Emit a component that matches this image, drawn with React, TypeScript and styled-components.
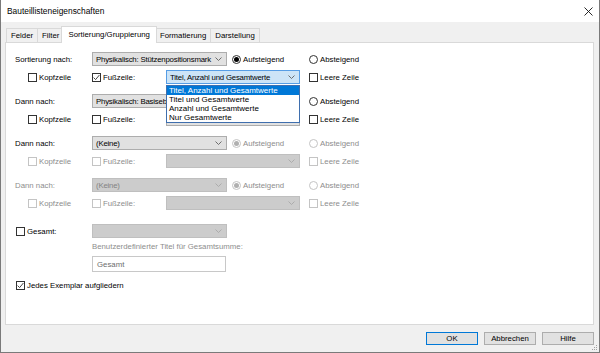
import styled, { createGlobalStyle } from 'styled-components';

const GlobalStyle = createGlobalStyle`
  html, body {
    margin: 0;
    padding: 0;
    background: #ffffff;
  }
  body {
    font-family: "Liberation Sans", Arial, sans-serif;
  }
  * {
    box-sizing: border-box;
  }
`;

const Window = styled.div`
  position: relative;
  width: 600px;
  height: 353px;
  display: flex;
  flex-direction: column;
  background: #f0f0f0;
  border: 1px solid #7a7a7a;
  border-top: none;
  font-size: 7.8px;
  color: #000;
`;

const TitleBar = styled.div`
  height: 22px;
  flex: none;
  display: flex;
  align-items: center;
  justify-content: space-between;
  padding: 0 6px 0 6px;
  background: #ffffff;
`;

const Title = styled.span`
  font-size: 8.4px;
  color: #000;
`;

const Body = styled.div`
  flex: 1;
  display: flex;
  flex-direction: column;
  padding: 0 5px 0 4px;
`;

const TabStrip = styled.div`
  height: 20px;
  display: flex;
  align-items: flex-end;
  padding-left: 1px;
`;

const Tab = styled.div<{ $active?: boolean }>`
  position: relative;
  display: flex;
  align-items: center;
  height: ${p => (p.$active ? '17px' : '14px')};
  margin: ${p => (p.$active ? '0 -2px -1px -2px' : '0 -1px 0 0')};
  padding: ${p => (p.$active ? '0 6px 1px' : '0 4px')};
  z-index: ${p => (p.$active ? 2 : 1)};
  background: ${p => (p.$active ? '#ffffff' : '#f0f0f0')};
  border: 1px solid #d9d9d9;
  border-bottom: none;
  white-space: nowrap;
`;

const Panel = styled.div`
  height: 283px;
  flex: none;
  background: #ffffff;
  border: 1px solid #d9d9d9;
  padding: 9px 0 0 9px;
  display: flex;
  flex-direction: column;
`;

const Group = styled.div`
  display: flex;
  flex-direction: column;
  gap: 4px;
  margin-bottom: 10px;
`;

const Row = styled.div<{ $top?: number; $indent?: number; $h?: number }>`
  display: flex;
  align-items: center;
  height: ${p => p.$h ?? 14}px;
  margin-top: ${p => p.$top ?? 0}px;
  margin-left: ${p => p.$indent ?? 0}px;
`;

const Cell = styled.div<{ $w?: number; $pad?: number; $off?: boolean }>`
  width: ${p => (p.$w ? `${p.$w}px` : 'auto')};
  flex: none;
  display: flex;
  align-items: center;
  padding-left: ${p => p.$pad ?? 0}px;
  color: ${p => (p.$off ? '#8d8d8d' : '#000')};
  white-space: nowrap;
`;

const FieldText = styled.span<{ $off?: boolean }>`
  color: ${p => (p.$off ? '#8d8d8d' : '#000')};
  white-space: nowrap;
`;

type ComboKind = 'normal' | 'open' | 'off';

const ComboBox = styled.div<{ $w: number; $kind: ComboKind; $gap?: number }>`
  position: relative;
  width: ${p => p.$w}px;
  height: 14px;
  flex: none;
  margin-right: ${p => p.$gap ?? 0}px;
  display: flex;
  align-items: center;
  padding: 0 4px 0 3px;
  background: ${p => (p.$kind === 'open' ? '#cce4f7' : p.$kind === 'off' ? '#cccccc' : '#e1e1e1')};
  border: 1px solid ${p => (p.$kind === 'open' ? '#569de5' : p.$kind === 'off' ? '#bfbfbf' : '#adadad')};
  color: ${p => (p.$kind === 'off' ? '#838383' : '#000')};
`;

const ComboText = styled.span`
  flex: 1;
  overflow: hidden;
  white-space: nowrap;
  letter-spacing: -0.2px;
`;

const Chevron = styled.svg`
  flex: none;
  margin-left: 3px;
`;

const DropList = styled.div`
  position: absolute;
  top: 14px;
  left: -1px;
  width: 134px;
  background: #ffffff;
  border: 1px solid #3f6fae;
  z-index: 5;
`;

const DropItem = styled.div<{ $sel?: boolean }>`
  height: 9px;
  line-height: 9px;
  padding-left: 2px;
  white-space: nowrap;
  font-size: 8px;
  background: ${p => (p.$sel ? '#0078d7' : '#ffffff')};
  color: ${p => (p.$sel ? '#ffffff' : '#000')};
`;

const Box = styled.span<{ $off?: boolean }>`
  width: 9px;
  height: 9px;
  flex: none;
  margin-right: 2px;
  display: inline-flex;
  align-items: center;
  justify-content: center;
  background: #ffffff;
  border: 1px solid ${p => (p.$off ? '#c4c4c4' : '#333333')};
`;

const Radio = styled.span<{ $off?: boolean; $on?: boolean }>`
  width: 9px;
  height: 9px;
  flex: none;
  margin-right: 2px;
  border-radius: 50%;
  display: inline-flex;
  align-items: center;
  justify-content: center;
  background: #ffffff;
  border: 1px solid ${p => (p.$off ? '#c4c4c4' : '#333333')};

  &::after {
    content: '';
    display: ${p => (p.$on ? 'block' : 'none')};
    width: 5px;
    height: 5px;
    border-radius: 50%;
    background: ${p => (p.$off ? '#b0b0b0' : '#000')};
  }
`;

const TextBox = styled.div`
  width: 134px;
  height: 16px;
  margin-left: 77px;
  margin-top: 5px;
  display: flex;
  align-items: center;
  padding-left: 4px;
  background: #ffffff;
  border: 1px solid #c8c8c8;
  color: #6d6d6d;
`;

const Footer = styled.div`
  display: flex;
  justify-content: flex-end;
  gap: 6px;
  padding-top: 7px;
`;

const Button = styled.div<{ $primary?: boolean }>`
  width: 52px;
  height: 13px;
  display: flex;
  align-items: center;
  justify-content: center;
  background: #e1e1e1;
  border: 1px solid ${p => (p.$primary ? '#0078d7' : '#adadad')};
`;

const Grip = styled.svg`
  position: absolute;
  right: 1px;
  bottom: 1px;
`;

const Chev = ({ off }: { off?: boolean }) => (
  <Chevron width="7" height="4" viewBox="0 0 7 4">
    <path d="M0.5 0.5 L3.5 3.5 L6.5 0.5" fill="none" stroke={off ? '#a8a8a8' : '#606060'} strokeWidth="0.9" />
  </Chevron>
);

const Check = ({ checked, off, label, w, pad }: { checked?: boolean; off?: boolean; label: string; w?: number; pad?: number }) => (
  <Cell $w={w} $pad={pad} $off={off}>
    <Box $off={off}>
      {checked && (
        <svg width="7" height="7" viewBox="0 0 7 7">
          <path d="M0.6 3.6 L2.6 5.6 L6.4 1" fill="none" stroke={off ? '#a0a0a0' : '#333'} strokeWidth="0.9" />
        </svg>
      )}
    </Box>
    {label}
  </Cell>
);

const Option = ({ on, off, label, w }: { on?: boolean; off?: boolean; label: string; w: number }) => (
  <Cell $w={w} $off={off}>
    <Radio $on={on} $off={off} />
    {label}
  </Cell>
);

const Combo = ({ text, kind, w, gap, open }: { text: string; kind: ComboKind; w: number; gap?: number; open?: boolean }) => (
  <ComboBox $w={w} $kind={kind} $gap={gap}>
    <ComboText>{text}</ComboText>
    <Chev off={kind === 'off'} />
    {open && (
      <DropList>
        <DropItem $sel>Titel, Anzahl und Gesamtwerte</DropItem>
        <DropItem>Titel und Gesamtwerte</DropItem>
        <DropItem>Anzahl und Gesamtwerte</DropItem>
        <DropItem>Nur Gesamtwerte</DropItem>
      </DropList>
    )}
  </ComboBox>
);

interface SortGroupProps {
  label: string;
  value: string;
  labelOff?: boolean;
  comboKind: ComboKind;
  sortOff?: boolean;
  subOff?: boolean;
  footer?: boolean;
  subText?: string;
  open?: boolean;
}

const SortGroup = ({ label, value, labelOff, comboKind, sortOff, subOff, footer, subText, open }: SortGroupProps) => (
  <Group>
    <Row>
      <Cell $w={77} $off={labelOff}>{label}</Cell>
      <Combo text={value} kind={comboKind} w={135} gap={5} />
      <Option w={77} on off={sortOff} label="Aufsteigend" />
      <Option w={80} off={sortOff} label="Absteigend" />
    </Row>
    <Row>
      <Check w={77} pad={13} off={subOff} label="Kopfzeile" />
      <Check w={74} pad={0} off={subOff} checked={footer} label="Fußzeile:" />
      <Combo text={subText ?? ''} kind={subOff ? 'off' : open ? 'open' : 'normal'} w={134} gap={9} open={open} />
      <Check off={subOff} label="Leere Zeile" />
    </Row>
  </Group>
);

export default function App() {
  return (
    <>
      <GlobalStyle />
      <Window>
        <TitleBar>
          <Title>Bauteillisteneigenschaften</Title>
          <svg width="9" height="9" viewBox="0 0 9 9">
            <path d="M0.5 0.5 L8.5 8.5 M8.5 0.5 L0.5 8.5" stroke="#111" strokeWidth="0.9" />
          </svg>
        </TitleBar>
        <Body>
          <TabStrip>
            <Tab>Felder</Tab>
            <Tab>Filter</Tab>
            <Tab $active>Sortierung/Gruppierung</Tab>
            <Tab>Formatierung</Tab>
            <Tab>Darstellung</Tab>
          </TabStrip>
          <Panel>
            <SortGroup
              label="Sortierung nach:"
              value="Physikalisch: Stützenpositionsmark"
              comboKind="normal"
              footer
              subText="Titel, Anzahl und Gesamtwerte"
              open
            />
            <SortGroup label="Dann nach:" value="Physikalisch: Basisebe" comboKind="normal" />
            <SortGroup label="Dann nach:" value="(Keine)" comboKind="normal" sortOff subOff />
            <SortGroup label="Dann nach:" value="(Keine)" labelOff comboKind="off" sortOff subOff />
            <Row $top={4}>
              <Check w={77} pad={1} label="Gesamt:" />
              <Combo text="" kind="off" w={135} />
            </Row>
            <Row $top={3} $indent={77} $h={10}>
              <FieldText $off>Benutzerdefinierter Titel für Gesamtsumme:</FieldText>
            </Row>
            <TextBox>Gesamt</TextBox>
            <Row $top={8} $h={10}>
              <Check pad={1} checked label="Jedes Exemplar aufgliedern" />
            </Row>
          </Panel>
          <Footer>
            <Button $primary>OK</Button>
            <Button>Abbrechen</Button>
            <Button>Hilfe</Button>
          </Footer>
        </Body>
        <Grip width="6" height="6" viewBox="0 0 6 6">
          <rect x="4" y="0" width="1" height="1" fill="#a0a0a0" />
          <rect x="2" y="2" width="1" height="1" fill="#a0a0a0" />
          <rect x="4" y="2" width="1" height="1" fill="#a0a0a0" />
          <rect x="0" y="4" width="1" height="1" fill="#a0a0a0" />
          <rect x="2" y="4" width="1" height="1" fill="#a0a0a0" />
          <rect x="4" y="4" width="1" height="1" fill="#a0a0a0" />
        </Grip>
      </Window>
    </>
  );
}
